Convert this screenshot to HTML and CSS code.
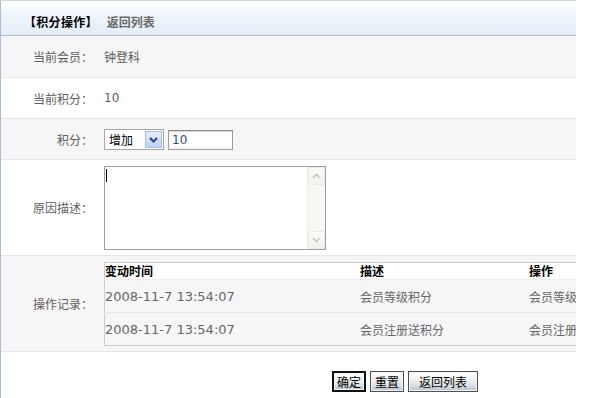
FILE: index.html
```html
<!DOCTYPE html>
<html lang="zh-CN">
<head>
<meta charset="utf-8">
<title>积分操作</title>
<link rel="stylesheet" href="styles.css">
</head>
<body>
<div class="page">
  <div class="titlebar">
    <span class="title-main">【积分操作】</span>
    <a class="title-link">返回列表</a>
  </div>

  <div class="row row-gray h41">
    <div class="label">当前会员：</div>
    <div class="value">钟登科</div>
  </div>
  <div class="row h40">
    <div class="label">当前积分：</div>
    <div class="value num">10</div>
  </div>
  <div class="row row-gray h40">
    <div class="label">积分：</div>
    <div class="value controls">
      <div class="select">
        <span class="select-text">增加</span>
        <span class="select-btn">
          <svg width="9" height="6" viewBox="0 0 9 6"><path d="M1 1 L4.5 4.5 L8 1" fill="none" stroke="#24428f" stroke-width="2"/></svg>
        </span>
      </div>
      <div class="input">10</div>
    </div>
  </div>
  <div class="row row-desc">
    <div class="label">原因描述：</div>
    <div class="value">
      <div class="textarea">
        <div class="ta-body"><span class="caret"></span></div>
        <div class="scrollbar">
          <span class="sb-btn">
            <svg width="9" height="6" viewBox="0 0 9 6"><path d="M1 5 L4.5 1.5 L8 5" fill="none" stroke="#c8c8c0" stroke-width="1.6"/></svg>
          </span>
          <span class="sb-track"></span>
          <span class="sb-btn">
            <svg width="9" height="6" viewBox="0 0 9 6"><path d="M1 1 L4.5 4.5 L8 1" fill="none" stroke="#c8c8c0" stroke-width="1.6"/></svg>
          </span>
        </div>
      </div>
    </div>
  </div>
  <div class="row row-gray row-log">
    <div class="label">操作记录：</div>
    <div class="value log-cell">
      <table class="log">
        <thead>
          <tr><th class="c1">变动时间</th><th class="c2">描述</th><th class="c3">操作</th></tr>
        </thead>
        <tbody>
          <tr><td class="num">2008-11-7 13:54:07</td><td>会员等级积分</td><td>会员等级积分</td></tr>
          <tr><td class="num">2008-11-7 13:54:07</td><td>会员注册送积分</td><td>会员注册送积分</td></tr>
        </tbody>
      </table>
    </div>
  </div>

  <div class="actions">
    <button class="btn btn-default" type="button">确定</button>
    <button class="btn" type="button">重置</button>
    <button class="btn btn-wide" type="button">返回列表</button>
  </div>
</div>
</body>
</html>
```

FILE: styles.css
```css
html, body {
  margin: 0;
  padding: 0;
  background: #ffffff;
}
body {
  font-family: "DejaVu Sans", "Noto Sans CJK SC", sans-serif;
  font-size: 12px;
  color: #5a5a5a;
}
.page {
  width: 575px;
  border-top: 1px solid #c9dcc9;
  border-left: 1px solid #a8bed6;
  min-height: 397px;
  overflow: hidden;
}
.titlebar {
  margin-top: 6px;
  height: 28px;
  background: linear-gradient(#f6faff 0%, #eef4fb 40%, #e4ecf6 100%);
  border-bottom: 1px solid #aebccb;
  display: flex;
  align-items: center;
  padding-left: 23px;
  font-family: "Noto Sans CJK SC", sans-serif;
  font-weight: bold;
  font-size: 12px;
}
.title-main {
  color: #000;
  letter-spacing: 0.3px;
}
.title-link {
  color: #6a6a6a;
  margin-left: 9px;
}
.row {
  display: flex;
  align-items: center;
  border-bottom: 1px solid #e6e6e6;
  background: #fff;
}
.row-gray {
  background: #f6f6f6;
}
.h41 { height: 41px; }
.h40 { height: 40px; }
.label {
  width: 92px;
  flex: none;
  text-align: right;
  padding-right: 11px;
  font-family: "Noto Sans CJK SC", sans-serif;
  color: #5e5e5e;
}
.value {
  flex: 1;
  min-width: 0;
  font-family: "Noto Sans CJK SC", sans-serif;
  color: #5e5e5e;
}
.num {
  font-family: "DejaVu Sans", "Noto Sans CJK SC", sans-serif;
  font-size: 12px;
}
.controls {
  display: flex;
  align-items: center;
  gap: 4px;
  padding-top: 1px;
}
.select {
  width: 58px;
  height: 19px;
  border: 1px solid #a7a7a7;
  background: #fff;
  display: flex;
  align-items: center;
  justify-content: space-between;
  box-sizing: content-box;
}
.select-text {
  color: #000;
  padding-left: 4px;
  font-family: "Noto Sans CJK SC", sans-serif;
}
.select-btn {
  width: 15px;
  height: 15px;
  margin-right: 1px;
  border: 1px solid #a9c0ee;
  background: linear-gradient(#e6edfd, #bfd0f8);
  display: flex;
  align-items: center;
  justify-content: center;
}
.input {
  width: 60px;
  height: 18px;
  border: 1px solid #9c9c9c;
  border-top-color: #8a8a8a;
  background: linear-gradient(#f7f5fa, #fff 30%, #fff 80%, #f3f0f5);
  color: #2c4a88;
  font-family: "DejaVu Sans", sans-serif;
  line-height: 18px;
  padding-left: 3px;
  box-shadow: inset 0 1px 0 #d6d6d6;
}
.row-desc {
  height: 95px;
}
.textarea {
  width: 220px;
  height: 82px;
  border: 1px solid #9e9e9e;
  background: #fff;
  display: flex;
}
.ta-body {
  flex: 1;
}
.caret {
  display: block;
  width: 1px;
  height: 13px;
  background: #000;
  margin: 2px 0 0 1px;
}
.scrollbar {
  width: 17px;
  display: flex;
  flex-direction: column;
  background: #f8f8f3;
  border-left: 1px solid #f0f0ea;
}
.sb-btn {
  height: 16px;
  border: 1px solid #ecece4;
  background: linear-gradient(#fbfbf8, #f2f2ec);
  display: flex;
  align-items: center;
  justify-content: center;
}
.sb-track {
  flex: 1;
}
.row-log {
  height: 95px;
  align-items: center;
}
.log-cell {
  overflow: hidden;
  padding-top: 1px;
}
.log {
  border-collapse: collapse;
  width: 560px;
  border: 1px solid #cdcdcd;
  border-right: none;
  table-layout: fixed;
}
.log th {
  background: #fff;
  color: #000;
  font-weight: bold;
  text-align: left;
  height: 16px;
  padding: 0;
  font-family: "Noto Sans CJK SC", sans-serif;
  font-size: 12px;
  line-height: 16px;
  border-bottom: 1px solid #ececec;
}
.log .c1 { width: 255px; }
.log .c2 { width: 169px; }
.log td {
  height: 32px;
  padding: 0;
  color: #666;
  font-family: "Noto Sans CJK SC", sans-serif;
  white-space: nowrap;
  overflow: hidden;
  border-bottom: 1px solid #e6e6e6;
  vertical-align: middle;
}
.log td.num {
  font-family: "DejaVu Sans", sans-serif;
  font-size: 13px;
}
.log tbody tr:last-child td {
  border-bottom: none;
}
.actions {
  display: flex;
  gap: 4px;
  padding-left: 331px;
  margin-top: 19px;
}
.btn {
  height: 21px;
  padding: 0 4px;
  border: 1px solid #4f4f4f;
  background: linear-gradient(#ffffff 0%, #f0f0f0 45%, #d7dce3 75%, #b7bfc9 100%);
  font-family: "Noto Sans CJK SC", sans-serif;
  font-size: 12px;
  color: #000;
  line-height: 18px;
  box-shadow: inset 0 0 0 1px #f4f4f4;
}
.btn-default {
  border: 2px solid #111;
  padding: 0 3px;
}
.btn-wide {
  padding: 0 10px;
}
```
